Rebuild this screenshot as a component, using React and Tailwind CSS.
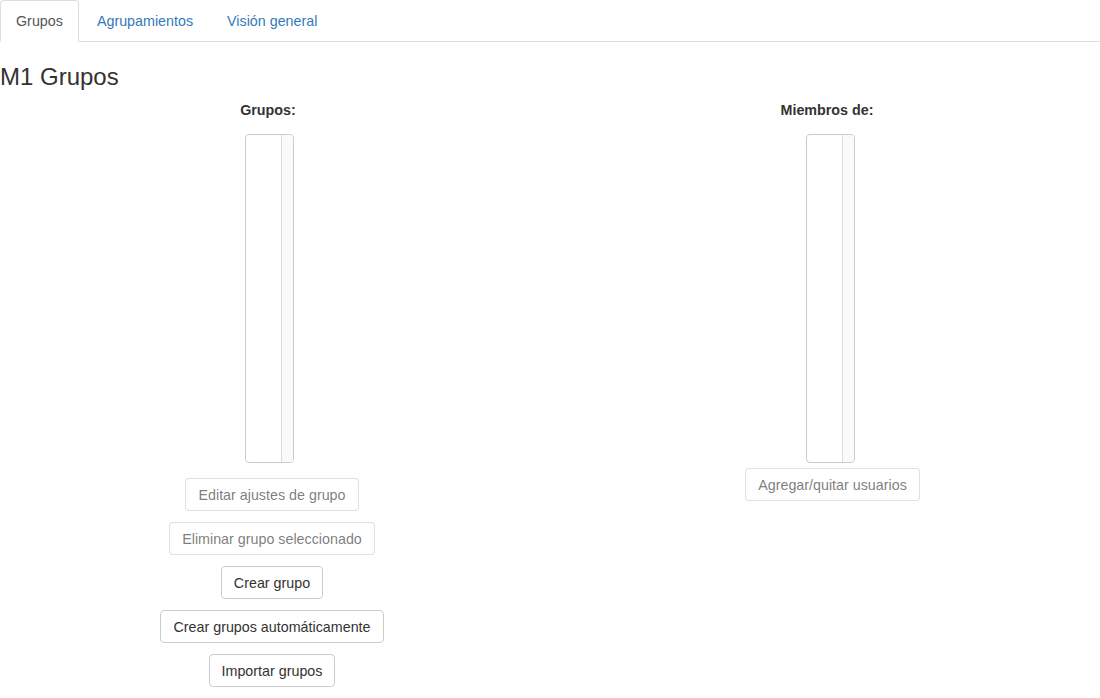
import React from "react";

function ListBox() {
  return (
    <div className="flex w-[49px] h-[329px] border border-[#ccc] rounded-[4px] bg-white overflow-hidden">
      <div className="flex-1" />
      <div className="w-[12px] border-l border-[#ddd] bg-[#fafafa]" />
    </div>
  );
}

function Btn({ children, disabled }) {
  return (
    <button
      type="button"
      className={
        disabled
          ? "h-[33px] px-[12px] border border-[#ccc]/60 rounded-[4px] bg-white text-[14.3px] text-[#333]/65 leading-[20px]"
          : "h-[33px] px-[12px] border border-[#ccc] rounded-[4px] bg-white text-[14.3px] text-[#333] leading-[20px]"
      }
    >
      {children}
    </button>
  );
}

export default function App() {
  const tabs = ["Grupos", "Agrupamientos", "Visión general"];

  return (
    <div className="bg-white min-h-screen text-[#333] text-[14.3px] leading-[20px] font-['Liberation_Sans',Arial,sans-serif]">
      {/* tabs */}
      <ul className="flex border-b border-[#ddd]">
        {tabs.map((t, i) => (
          <li key={t} className="-mb-px mr-[2px]">
            {i === 0 ? (
              <span className="block px-[15px] py-[10px] border border-[#ddd] border-b-white rounded-t-[4px] bg-white text-[#555]">
                {t}
              </span>
            ) : (
              <span className="block px-[15px] py-[10px] border border-transparent text-[#337ab7]">
                {t}
              </span>
            )}
          </li>
        ))}
      </ul>

      <h2 className="mt-[22px] text-[24px] leading-[26px] text-[#333]">M1 Grupos</h2>

      <div className="flex mt-[10px]">
        {/* left column */}
        <div className="w-[544px] flex flex-col items-center">
          <div className="font-bold mr-[8px]">Grupos:</div>
          <div className="mt-[14px] mr-[5px]">
            <ListBox />
          </div>
          <div className="mt-[15px] flex flex-col items-center gap-[11px]">
            <Btn disabled>Editar ajustes de grupo</Btn>
            <Btn disabled>Eliminar grupo seleccionado</Btn>
            <Btn>Crear grupo</Btn>
            <Btn>Crear grupos automáticamente</Btn>
            <Btn>Importar grupos</Btn>
          </div>
        </div>

        {/* right column */}
        <div className="flex-1 pl-[16px] flex flex-col items-center">
          <div className="font-bold mr-[6px]">Miembros de:</div>
          <div className="mt-[14px]">
            <ListBox />
          </div>
          <div className="mt-[5px] ml-[5px]">
            <Btn disabled>Agregar/quitar usuarios</Btn>
          </div>
        </div>
      </div>
    </div>
  );
}
